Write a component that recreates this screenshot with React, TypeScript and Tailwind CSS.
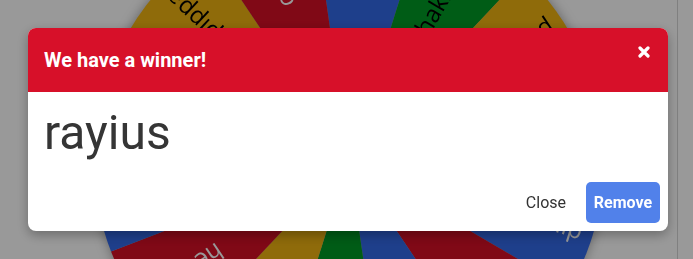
import React from 'react';

const SEGMENTS = [
  { name: 'tom', color: '#3369e8' },
  { name: 'shakleton', color: '#009925' },
  { name: 'ahmed', color: '#eeb211' },
  { name: 'grace', color: '#d50f25' },
  { name: 'philip', color: '#3369e8' },
  { name: 'marcus', color: '#d50f25' },
  { name: 'ali', color: '#3369e8' },
  { name: 'sam', color: '#009925' },
  { name: 'lily', color: '#eeb211' },
  { name: 'heather', color: '#d50f25' },
  { name: 'mia', color: '#3369e8' },
  { name: 'jonas', color: '#009925' },
  { name: 'pippa', color: '#eeb211' },
  { name: 'oswald', color: '#d50f25' },
];

const START = -8.2;
const STEP = 360 / SEGMENTS.length;
const C = 255;
const R = 255;

const point = (deg: number) => {
  const a = (deg * Math.PI) / 180;
  return [C + R * Math.sin(a), C - R * Math.cos(a)];
};

const Wheel: React.FC = () => (
  <svg width="510" height="510" viewBox="0 0 510 510" className="drop-shadow-[0_0_6px_rgba(0,0,0,0.35)]">
    {SEGMENTS.map((s, i) => {
      const a0 = START + STEP * i;
      const a1 = a0 + STEP;
      const [x0, y0] = point(a0);
      const [x1, y1] = point(a1);
      const mid = a0 + STEP / 2;
      const dark = s.color === '#eeb211' || s.color === '#009925';
      return (
        <g key={i}>
          <path d={`M${C} ${C} L${x0} ${y0} A${R} ${R} 0 0 1 ${x1} ${y1} Z`} fill={s.color} />
          <text
            x={C + R - 11}
            y={C}
            transform={`rotate(${mid - 90} ${C} ${C})`}
            textAnchor="end"
            dominantBaseline="middle"
            fontSize="24"
            fontFamily="'Open Sans', sans-serif"
            fill={dark ? '#000' : '#fff'}
          >
            {s.name}
          </text>
        </g>
      );
    })}
  </svg>
);

const App: React.FC = () => {
  return (
    <div className="relative h-screen w-full overflow-hidden bg-white font-['Roboto',sans-serif]">
      <div className="absolute left-[94px] top-[-95px]">
        <Wheel />
      </div>
      <div className="absolute right-0 top-0 bottom-0 w-[16px] border-l border-[#d6d6d6]" />

      {/* backdrop */}
      <div className="fixed inset-0 bg-black/40" />

      <div className="fixed inset-0 flex items-start pl-[28px] pt-[28px]">
        <div className="w-[640px] rounded-lg overflow-hidden bg-white shadow-[0_4px_12px_rgba(0,0,0,0.3)]">
          <div className="h-[64px] bg-[#d71029] flex justify-between items-center pl-4 pr-[18px]">
            <h2 className="text-[20px] leading-[24px] font-bold text-white">We have a winner!</h2>
            <button className="self-start pt-[18px]" title="Close">
              <svg width="12" height="12" viewBox="0 0 12 12">
                <path d="M2 2 L10 10 M10 2 L2 10" stroke="#fff" strokeWidth="3.2" strokeLinecap="round" />
              </svg>
            </button>
          </div>

          <div className="px-4 pt-[13px]">
            <div className="text-[48px] leading-[56px] text-[#353535]">rayius</div>
          </div>

          <div className="flex justify-end items-center gap-2 pt-[21px] pb-2 pr-2">
            <button className="px-3 h-[41px] text-[16px] text-[#333]">Close</button>
            <button className="w-[74px] h-[41px] rounded-[5px] bg-[#5181ea] text-[16px] font-bold text-white">
              Remove
            </button>
          </div>
        </div>
      </div>
    </div>
  );
};

export default App;
